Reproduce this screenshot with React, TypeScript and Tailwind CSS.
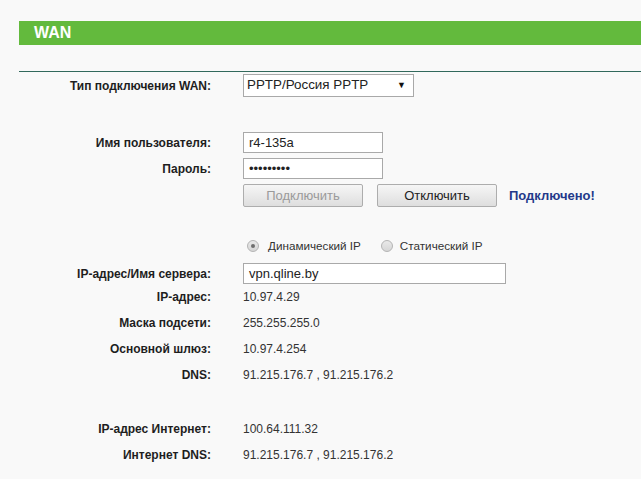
import React from "react";

function Row({ label, children, h = "h-[26px]", className = "" }: { label?: string; children?: React.ReactNode; h?: string; className?: string }) {
  return (
    <div className={`flex items-center ${h} ${className}`}>
      <div className="w-[211px] shrink-0 text-right font-bold text-[12px] text-[#1e1e1e]">{label}</div>
      <div className="ml-[32px] flex items-center">{children}</div>
    </div>
  );
}

function Input({ w, children }: { w: string; children: React.ReactNode }) {
  return (
    <div className={`${w} h-[21px] border border-[#a9a9a9] bg-white pl-[5px] flex items-center text-[13px] text-[#222]`}>{children}</div>
  );
}

function Btn({ children, disabled }: { children: React.ReactNode; disabled?: boolean }) {
  return (
    <div
      className={`w-[120px] h-[23px] border border-[#adadad] rounded-[2px] bg-gradient-to-b from-[#f6f6f6] to-[#dedede] flex items-center justify-center text-[13px] ${disabled ? "text-[#9a9a9a]" : "text-[#222]"}`}
    >
      {children}
    </div>
  );
}

function Radio({ checked }: { checked?: boolean }) {
  return (
    <span className="w-[12px] h-[12px] rounded-full border border-[#b4b4b4] bg-gradient-to-b from-[#e9e9e9] to-[#d6d6d6] flex items-center justify-center">
      {checked && <span className="w-[4px] h-[4px] rounded-full bg-[#6f6f6f]" />}
    </span>
  );
}

export default function App() {
  return (
    <div className="min-h-screen bg-[#f9f9f9] font-['Liberation_Sans',Arial,sans-serif] text-[12px] text-[#333]">
      <div className="pt-[21px] pl-[19px]">
        <div className="h-[24px] bg-[#63ba3d] pl-[15px] flex items-center text-white font-bold text-[16px]">WAN</div>
        <div className="mt-[26px] h-px bg-[#32695c]" />
      </div>
      <div className="pt-[2px]">
        <Row label="Тип подключения WAN:" h="h-[23px]">
          <div className="w-[171px] h-[23px] border border-[#a9a9a9] bg-white pl-[3px] pr-[7px] flex items-center justify-between text-[13.4px] text-[#222]">
            <span>PPTP/Россия PPTP</span>
            <span className="text-[9px] text-[#111]">▼</span>
          </div>
        </Row>
        <Row label="Имя пользователя:" h="h-[21px]" className="mt-[35px]">
          <Input w="w-[140px]">r4-135a</Input>
        </Row>
        <Row label="Пароль:" h="h-[21px]" className="mt-[5px]">
          <Input w="w-[140px]"><span className="text-[13px]">•••••••••</span></Input>
        </Row>
        <Row h="h-[23px]" className="mt-[5px]">
          <Btn disabled>Подключить</Btn>
          <div className="ml-[14px]"><Btn>Отключить</Btn></div>
          <span className="ml-[12px] font-bold text-[13px] text-[#24398a]">Подключено!</span>
        </Row>
        <Row h="h-[20px]" className="mt-[29px]">
          <div className="ml-[4px] flex items-center text-[11.7px] text-[#333]">
            <Radio checked />
            <span className="ml-[9px]">Динамический IP</span>
            <span className="ml-[20px]"><Radio /></span>
            <span className="ml-[7px]">Статический IP</span>
          </div>
        </Row>
        <Row label="IP-адрес/Имя сервера:" h="h-[21px]" className="mt-[7px]">
          <Input w="w-[263px]">vpn.qline.by</Input>
        </Row>
        <Row label="IP-адрес:">10.97.4.29</Row>
        <Row label="Маска подсети:">255.255.255.0</Row>
        <Row label="Основной шлюз:">10.97.4.254</Row>
        <Row label="DNS:">91.215.176.7 , 91.215.176.2</Row>
        <Row label="IP-адрес Интернет:" className="mt-[28px]">100.64.111.32</Row>
        <Row label="Интернет DNS:">91.215.176.7 , 91.215.176.2</Row>
      </div>
    </div>
  );
}
